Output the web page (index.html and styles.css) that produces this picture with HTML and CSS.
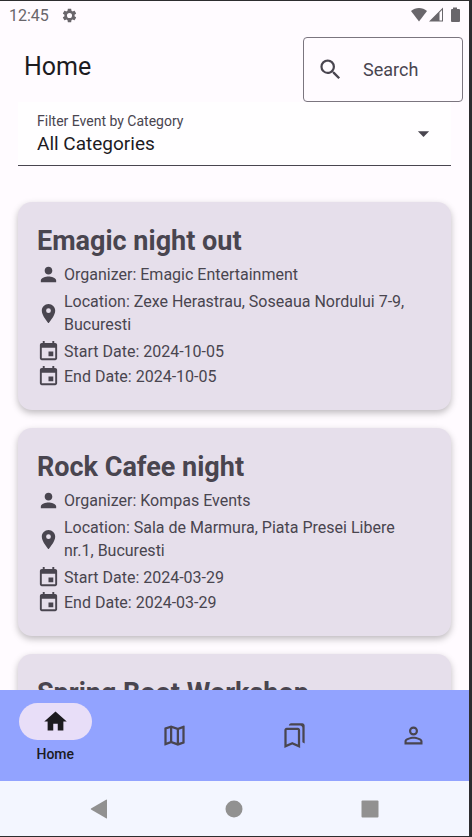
FILE: index.html
```html
<!DOCTYPE html>
<html lang="en">
<head>
<meta charset="utf-8">
<meta name="viewport" content="width=device-width, initial-scale=1">
<title>Home</title>
<link rel="stylesheet" href="styles.css">
</head>
<body>
<svg class="sprite" aria-hidden="true">
  <symbol id="person" viewBox="0 0 24 24"><path d="M12 12c2.21 0 4-1.79 4-4s-1.79-4-4-4-4 1.79-4 4 1.79 4 4 4zm0 2c-2.67 0-8 1.34-8 4v2h16v-2c0-2.66-5.33-4-8-4z"/></symbol>
  <symbol id="place" viewBox="0 0 24 24"><path d="M12 2C8.13 2 5 5.13 5 9c0 5.25 7 13 7 13s7-7.75 7-13c0-3.87-3.13-7-7-7zm0 9.5a2.5 2.5 0 0 1 0-5 2.5 2.5 0 0 1 0 5z"/></symbol>
  <symbol id="event" viewBox="0 0 24 24"><path d="M17 12h-5v5h5v-5zM16 1v2H8V1H6v2H5c-1.11 0-1.99.9-1.99 2L3 19c0 1.1.89 2 2 2h14c1.1 0 2-.9 2-2V5c0-1.1-.9-2-2-2h-1V1h-2zm3 18H5V8h14v11z"/></symbol>
</svg>
<div class="screen">
  <div class="status">
    <span class="clock">12:45</span>
    <svg class="status-gear" viewBox="0 0 24 24" aria-hidden="true"><path d="M19.14 12.94c.04-.3.06-.61.06-.94 0-.32-.02-.64-.07-.94l2.03-1.58c.18-.14.23-.41.12-.61l-1.92-3.32c-.12-.22-.37-.29-.59-.22l-2.39.96c-.5-.38-1.03-.7-1.62-.94l-.36-2.54c-.04-.24-.24-.41-.48-.41h-3.84c-.24 0-.43.17-.47.41l-.36 2.54c-.59.24-1.13.57-1.62.94l-2.39-.96c-.22-.08-.47 0-.59.22L2.74 8.87c-.12.21-.08.47.12.61l2.03 1.58c-.05.3-.09.63-.09.94s.02.64.07.94l-2.03 1.58c-.18.14-.23.41-.12.61l1.92 3.32c.12.22.37.29.59.22l2.39-.96c.5.38 1.03.7 1.62.94l.36 2.54c.05.24.24.41.48.41h3.84c.24 0 .44-.17.47-.41l.36-2.54c.59-.24 1.13-.56 1.62-.94l2.39.96c.22.08.47 0 .59-.22l1.92-3.32c.12-.22.07-.47-.12-.61l-2.01-1.58zM12 15.6A3.6 3.6 0 1 1 12 8.4a3.6 3.6 0 0 1 0 7.2z"/></svg>
    <svg class="status-signals" viewBox="0 0 50 16" aria-hidden="true">
      <path d="M0 4C4.500 0 11.500 0 16 4L8 14.500z"/>
      <path fill-rule="evenodd" d="M32 .5V14.500H18zM28.500 5.500V13.500H31V3z"/>
      <path d="M42 .5h4v1.500h2q1 0 1 1v11q0 1-1 1h-7q-1 0-1-1V3q0-1 1-1h1z"/>
    </svg>
  </div>

  <header class="header">
    <h1 class="page-title">Home</h1>
    <label class="search">
      <svg class="icon" viewBox="0 0 24 24" aria-hidden="true"><path d="M15.5 14h-.79l-.28-.27A6.471 6.471 0 0 0 16 9.500 6.500 6.500 0 1 0 9.500 16c1.610 0 3.090-.59 4.230-1.570l.27.28v.79l5 4.990L20.490 19l-4.990-5zm-6 0C7.010 14 5 11.990 5 9.500S7.010 5 9.500 5 14 7.010 14 9.500 11.990 14 9.500 14z"/></svg>
      <input class="search-input" type="text" placeholder="Search" aria-label="Search">
    </label>
  </header>

  <div class="filter">
    <div class="filter-text">
      <label class="filter-label" for="category">Filter Event by Category</label>
      <select class="filter-select" id="category"><option>All Categories</option></select>
    </div>
    <svg class="icon" viewBox="0 0 24 24" aria-hidden="true"><path d="M7 10l5 5 5-5z"/></svg>
  </div>

  <main class="events">
    <article class="card">
      <h2 class="card-title">Emagic night out</h2>
      <p class="row"><svg class="row-icon" aria-hidden="true"><use href="#person"/></svg><span>Organizer: Emagic Entertainment</span></p>
      <p class="row row-place"><svg class="row-icon" aria-hidden="true"><use href="#place"/></svg><span>Location: Zexe Herastrau, Soseaua Nordului 7-9, Bucuresti</span></p>
      <p class="row"><svg class="row-icon" aria-hidden="true"><use href="#event"/></svg><span>Start Date: 2024-10-05</span></p>
      <p class="row"><svg class="row-icon" aria-hidden="true"><use href="#event"/></svg><span>End Date: 2024-10-05</span></p>
    </article>
    <article class="card">
      <h2 class="card-title">Rock Cafee night</h2>
      <p class="row"><svg class="row-icon" aria-hidden="true"><use href="#person"/></svg><span>Organizer: Kompas Events</span></p>
      <p class="row row-place"><svg class="row-icon" aria-hidden="true"><use href="#place"/></svg><span>Location: Sala de Marmura, Piata Presei Libere nr.1, Bucuresti</span></p>
      <p class="row"><svg class="row-icon" aria-hidden="true"><use href="#event"/></svg><span>Start Date: 2024-03-29</span></p>
      <p class="row"><svg class="row-icon" aria-hidden="true"><use href="#event"/></svg><span>End Date: 2024-03-29</span></p>
    </article>
    <article class="card">
      <h2 class="card-title">Spring Boot Workshop</h2>
    </article>
  </main>

  <nav class="tabs">
    <a class="tab tab-active" href="#home">
      <span class="pill"><svg class="icon" viewBox="0 0 24 24" aria-hidden="true"><path d="M10 20v-6h4v6h5v-8h3L12 3 2 12h3v8z"/></svg></span>
      <span>Home</span>
    </a>
    <a class="tab" href="#map" aria-label="Map">
      <svg class="icon" viewBox="0 0 24 24" aria-hidden="true"><path d="M20.500 3l-.16.030L15 5.100 9 3 3.360 4.900c-.21.070-.36.250-.36.480V20.500c0 .28.220.5.5.5l.16-.030L9 18.900l6 2.100 5.640-1.900c.21-.070.36-.250.36-.480V3.500c0-.28-.220-.5-.5-.5zM10 5.470l4 1.400v11.660l-4-1.400V5.470zm-5 .99l3-1.010v11.700l-3 1.160V6.460zm14 11.080l-3 1.010V6.860l3-1.160v11.840z"/></svg>
    </a>
    <a class="tab" href="#saved" aria-label="Saved">
      <svg class="icon" viewBox="0 0 24 24" aria-hidden="true"><path d="M15 7v12.970l-4.210-1.810-.79-.34-.79.34L5 19.970V7h10m4-6H8.990C7.890 1 7 1.900 7 3h10c1.100 0 2 .9 2 2v13l2 1V3c0-1.100-.9-2-2-2zm-4 4H5c-1.100 0-2 .9-2 2v16l7-3 7 3V7c0-1.100-.9-2-2-2z"/></svg>
    </a>
    <a class="tab" href="#profile" aria-label="Profile">
      <svg class="icon" viewBox="0 0 24 24" aria-hidden="true"><path d="M12 5.900a2.100 2.100 0 1 1 0 4.200 2.100 2.100 0 0 1 0-4.200m0 9c2.970 0 6.100 1.460 6.100 2.100v1.100H5.900V17c0-.64 3.130-2.100 6.100-2.100M12 4C9.790 4 8 5.790 8 8s1.790 4 4 4 4-1.790 4-4-1.790-4-4-4zm0 9c-2.670 0-8 1.340-8 4v3h16v-3c0-2.660-5.330-4-8-4z"/></svg>
    </a>
  </nav>

  <div class="system">
    <button class="system-button" aria-label="Back"><svg class="system-icon" viewBox="0 0 20 20"><path d="M17.500 .5Q18 .5 18 1V19Q18 19.500 17.500 19.500L2 10.500Q1.500 10 2 9.500z"/></svg></button>
    <button class="system-button" aria-label="Home screen"><svg class="system-icon" viewBox="0 0 20 20"><circle cx="10" cy="10" r="8.500"/></svg></button>
    <button class="system-button" aria-label="Recent apps"><svg class="system-icon" viewBox="0 0 20 20"><rect x="1.500" y="1.500" width="17" height="17" rx="1"/></svg></button>
  </div>
</div>
</body>
</html>
```
FILE: styles.css
```css
* {
  box-sizing: border-box;
}

body {
  margin: 0;
  background: #fffbff;
  color: #1c1b1f;
  font-family: Roboto, "Liberation Sans", sans-serif;
}

h1, h2, p {
  margin: 0;
}

svg {
  display: block;
  flex: none;
  fill: currentColor;
}

.sprite {
  display: none;
}

.icon {
  width: 27px;
  height: 27px;
}

.screen {
  display: flex;
  flex-direction: column;
  height: 100vh;
  border: solid #2d2d2f;
  border-width: 1px 3px 1px 0;
}

.status {
  display: flex;
  flex: none;
  align-items: center;
  height: 28px;
  padding: 0 8px 0 9px;
  color: #69666b;
  font-size: 16px;
}

.status-gear {
  width: 17px;
  height: 17px;
  margin-left: 12px;
}

.status-signals {
  width: 50px;
  height: 16px;
  margin-left: auto;
}

.header {
  display: flex;
  flex: none;
  align-items: center;
  justify-content: space-between;
  padding: 8px 6px 0 24px;
}

.page-title {
  padding-bottom: 6px;
  font-size: 25px;
  font-weight: 400;
}

.search {
  display: flex;
  align-items: center;
  gap: 19px;
  width: 160px;
  height: 65px;
  padding: 0 12px 0 13px;
  border: 1px solid #7b757f;
  border-radius: 4px;
  color: #49454f;
}

.search-input {
  flex: 1;
  min-width: 0;
  padding: 0;
  border: 0;
  outline: 0;
  background: none;
  color: #49454f;
  font: inherit;
  font-size: 18px;
}

.search-input::placeholder {
  color: #49454f;
  opacity: 1;
}

.filter {
  display: flex;
  flex: none;
  align-items: center;
  height: 64px;
  margin: 0 18px;
  padding: 0 14px 0 19px;
  border-bottom: 1px solid #49454f;
  background: #fffeff;
  color: #49454f;
}

.filter-text {
  display: flex;
  flex: 1;
  flex-direction: column;
}

.filter-label {
  font-size: 14px;
  line-height: 20px;
}

.filter-select {
  height: 26px;
  padding: 0;
  border: 0;
  outline: 0;
  appearance: none;
  background: none;
  color: #1c1b1f;
  font: inherit;
  font-size: 19px;
}

.events {
  display: flex;
  flex: 1;
  flex-direction: column;
  gap: 18px;
  min-height: 0;
  overflow: hidden;
  padding: 36px 18px 0;
}

.card {
  flex: none;
  padding: 19px 28px 21px 19px;
  border-radius: 14px;
  background: #e6dfeb;
  box-shadow: 0 3px 7px rgba(0, 0, 0, 0.26);
  color: #49454f;
}

.card-title {
  padding-bottom: 1px;
  font-size: 27px;
  line-height: 40px;
}

.row {
  display: flex;
  align-items: center;
  gap: 4px;
  min-height: 25px;
  font-size: 16px;
  line-height: 23px;
}

.row-place {
  padding: 3px 0;
}

.row-icon {
  width: 23px;
  height: 23px;
}

.tabs {
  display: grid;
  flex: none;
  grid-template-columns: repeat(4, 1fr);
  gap: 9px;
  height: 91px;
  background: #92a3ff;
}

.tab {
  display: flex;
  flex-direction: column;
  align-items: center;
  justify-content: center;
  gap: 4px;
  color: #49454f;
  font-size: 14px;
  font-weight: 500;
  line-height: 20px;
  text-decoration: none;
}

.tab-active {
  padding-bottom: 4px;
  color: #1c1b1f;
}

.pill {
  display: flex;
  align-items: center;
  justify-content: center;
  width: 73px;
  height: 37px;
  border-radius: 19px;
  background: #e8def8;
}

.system {
  display: grid;
  flex: none;
  grid-template-columns: repeat(3, 1fr);
  height: 55px;
  padding: 0 31px;
  background: #f3f6ff;
}

.system-button {
  display: flex;
  align-items: center;
  justify-content: center;
  padding: 0;
  border: 0;
  background: none;
  color: #919191;
}

.system-icon {
  width: 20px;
  height: 20px;
}
```
